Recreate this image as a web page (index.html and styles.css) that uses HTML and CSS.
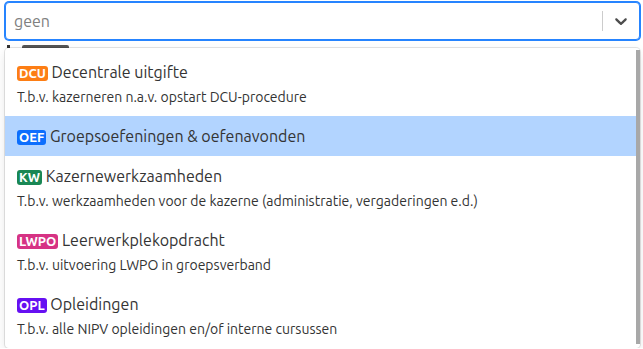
FILE: index.html
```html
<!DOCTYPE html>
<html lang="nl">
<head>
  <meta name="viewport" content="width=device-width, initial-scale=1">
  <link rel="stylesheet" href="styles.css">
  <title>Activiteit</title>
</head>
<body>

<div class="select-wrap">
  <!-- Control -->
  <div class="select-control">
    <div class="select-value">geen</div>
    <div class="select-indicators">
      <span class="select-separator"></span>
      <span class="select-arrow">
        <svg width="20" height="20" viewBox="0 0 20 20"><path d="M4.516 7.548c0.436-0.446 1.043-0.481 1.576 0l3.908 3.747 3.908-3.747c0.533-0.481 1.141-0.446 1.574 0 0.436 0.445 0.408 1.197 0 1.615-0.406 0.418-4.695 4.502-4.695 4.502-0.217 0.223-0.502 0.335-0.787 0.335s-0.57-0.112-0.789-0.335c0 0-4.287-4.084-4.695-4.502s-0.436-1.17 0-1.615z" fill="currentColor"/></svg>
      </span>
    </div>
  </div>

  <!-- Content below the select, partly hidden by the open menu -->
  <div class="below">
    <span class="below-dot"></span>
    <span class="below-bar"></span>
  </div>

  <!-- Open menu -->
  <div class="select-menu">
    <div class="select-list">
      <div class="option">
        <div class="option-title"><span class="badge badge-dcu">DCU</span> Decentrale uitgifte</div>
        <div class="option-desc">T.b.v. kazerneren n.a.v. opstart DCU-procedure</div>
      </div>
      <div class="option focused">
        <div class="option-title"><span class="badge badge-oef">OEF</span> Groepsoefeningen &amp; oefenavonden</div>
      </div>
      <div class="option">
        <div class="option-title"><span class="badge badge-kw">KW</span> Kazernewerkzaamheden</div>
        <div class="option-desc">T.b.v. werkzaamheden voor de kazerne (administratie, vergaderingen e.d.)</div>
      </div>
      <div class="option">
        <div class="option-title"><span class="badge badge-lwpo">LWPO</span> Leerwerkplekopdracht</div>
        <div class="option-desc">T.b.v. uitvoering LWPO in groepsverband</div>
      </div>
      <div class="option">
        <div class="option-title"><span class="badge badge-opl">OPL</span> Opleidingen</div>
        <div class="option-desc">T.b.v. alle NIPV opleidingen en/of interne cursussen</div>
      </div>
    </div>
    <!-- scrollbar thumb -->
    <div class="scroll-thumb"></div>
  </div>
</div>

</body>
</html>
```

FILE: styles.css
```css
body {
  font-family: Ubuntu, "Noto Sans", "Open Sans", sans-serif;
  background-color: #fff;
  color: #333;
  margin: 0;
  padding: 2px 3px 0 5px;
}
.select-wrap {
  display: flex;
  flex-direction: column;
}
.select-control {
  display: flex;
  align-items: center;
  height: 38px;
  box-sizing: border-box;
  border: 1px solid #2684ff;
  box-shadow: 0 0 0 1px #2684ff;
  border-radius: 4px;
  background-color: #fff;
}
.select-value {
  flex: 1;
  padding: 2px 8px;
  font-size: 16px;
  color: #808080;
}
.select-indicators {
  display: flex;
  align-items: center;
  align-self: stretch;
}
.select-separator {
  width: 1px;
  align-self: stretch;
  margin: 8px 0;
  background-color: #ccc;
}
.select-arrow {
  display: flex;
  padding: 8px;
  color: #4d4d4d;
}
.below {
  display: flex;
  align-items: flex-start;
  gap: 12px;
  height: 0;
  margin-top: 5px;
  padding-left: 2px;
}
.below-dot {
  flex: none;
  width: 3px;
  height: 3px;
  background-color: #333;
}
.below-bar {
  flex: none;
  width: 47px;
  height: 6px;
  background-color: #555;
  border-radius: 2px;
}
.select-menu {
  display: flex;
  position: relative;
  z-index: 1;
  margin-top: 3px;
  background-color: #fff;
  border-radius: 4px;
  box-shadow: 0 0 0 1px rgba(0, 0, 0, 0.1), 0 4px 11px rgba(0, 0, 0, 0.1);
}
.select-list {
  flex: 1;
  max-height: 300px;
  overflow: hidden;
  padding: 4px 0;
  box-sizing: border-box;
}
.scroll-thumb {
  flex: none;
  position: relative;
  width: 4px;
  margin: 2px 0 4px -4px;
  background-color: #a8a8a8;
}
.option {
  padding: 8px 12px;
}
.option.focused {
  background-color: #b2d4ff;
}
.option-title {
  font-size: 16px;
  line-height: 24px;
  color: #333;
}
.option-desc {
  margin-top: 3px;
  font-size: 14px;
  line-height: 21px;
  color: #333;
}
.badge {
  display: inline-block;
  padding: 0 2px;
  font-size: 13px;
  font-weight: bold;
  line-height: 15px;
  color: #fff;
  border-radius: 3px;
}
.badge-dcu { background-color: #fd7e14; }
.badge-oef { background-color: #0d6efd; }
.badge-kw { background-color: #198754; }
.badge-lwpo { background-color: #d63384; }
.badge-opl { background-color: #6610f2; }
```
